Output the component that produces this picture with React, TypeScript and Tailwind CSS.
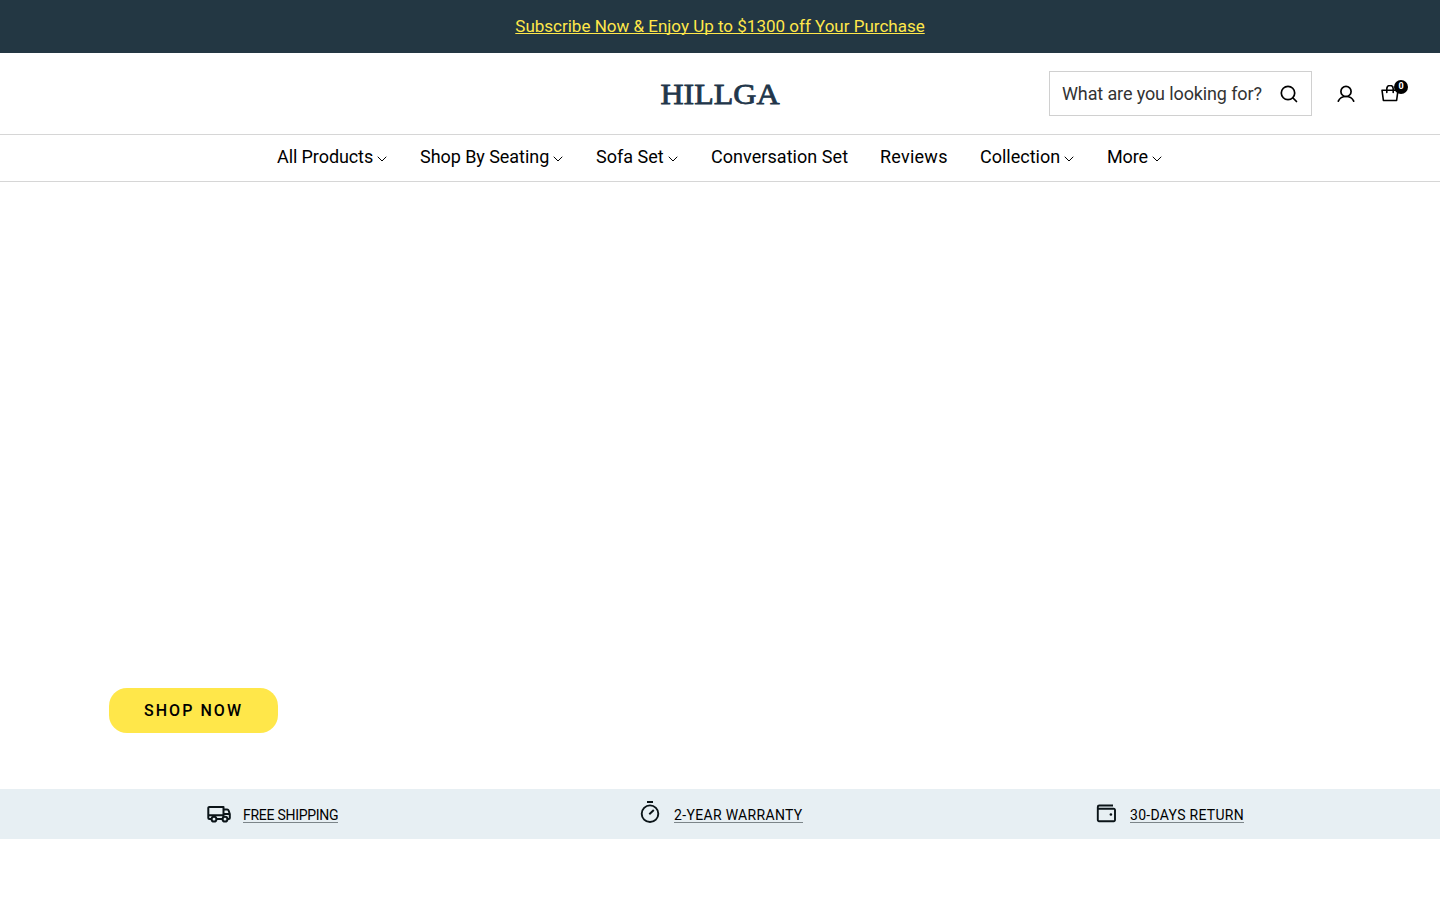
import React from "react";

const navItems = [
  { label: "All Products", menu: true, width: "w-[110px]", tracking: "tracking-[-0.09px]" },
  { label: "Shop By Seating", menu: true, width: "w-[143px]", tracking: "tracking-[-0.05px]" },
  { label: "Sofa Set", menu: true, width: "w-[82px]", tracking: "tracking-normal" },
  { label: "Conversation Set", menu: false, width: "w-[137px]", tracking: "tracking-[0.05px]" },
  { label: "Reviews", menu: false, width: "w-[68px]", tracking: "tracking-[0.24px]" },
  { label: "Collection", menu: true, width: "w-[94px]", tracking: "tracking-normal" },
  { label: "More", menu: true, width: "w-[55px]", tracking: "tracking-[-0.1px]" },
];

function Chevron() {
  return (
    <svg className="mt-[5px] h-[6px] w-[10px] shrink-0" viewBox="0 0 10 6" fill="none" stroke="#000" strokeWidth="1" strokeLinecap="round" strokeLinejoin="round">
      <path d="M1 1l4 4 4-4" />
    </svg>
  );
}

function TruckIcon() {
  return (
    <svg className="block h-6 w-6" viewBox="0 0 24 24" fill="none" stroke="#0b1418" strokeWidth="2" strokeLinejoin="round" strokeLinecap="round">
      <path d="M4.500 17H2.300A1 1 0 0 1 1.300 16V6a1 1 0 0 1 1-1H16.500V17H9.500M16.500 7.500h3.700a1.500 1.500 0 0 1 1.400 1l1.200 3.500v4a1 1 0 0 1-1 1h-1M16.500 12h6M1.500 13.300h15" />
      <circle cx="7" cy="17.200" r="2.400" fill="#e7eff3" />
      <circle cx="18" cy="17.200" r="2.400" fill="#e7eff3" />
    </svg>
  );
}

function TimerIcon() {
  return (
    <svg className="mb-[4px] block h-6 w-6" viewBox="0 0 24 24" fill="none" stroke="#0b1418" strokeWidth="1.900">
      <circle cx="12" cy="13.700" r="8.300" />
      <path d="M9 2h6M11.300 14.300l4.500-4.300" />
    </svg>
  );
}

function WalletIcon() {
  return (
    <svg className="mb-[3px] block h-6 w-6" viewBox="0 0 24 24" fill="none" stroke="#0b1418" strokeWidth="1.900" strokeLinejoin="round">
      <path d="M3.800 7.800h16a1.200 1.200 0 0 1 1.200 1.200v10a1.200 1.200 0 0 1-1.200 1.200H5A1.200 1.200 0 0 1 3.800 19V6A1.500 1.500 0 0 1 5.300 4.500H19" />
      <circle cx="16.900" cy="13.500" r="1.300" fill="#0b1418" stroke="none" />
    </svg>
  );
}

export default function App() {
  return (
    <div className="h-[900px] w-full overflow-hidden bg-white font-[Roboto,sans-serif] text-black">
      <div className="flex h-[53px] items-center justify-center bg-[#233743]">
        <a className="text-[17px] leading-[25px] whitespace-nowrap text-[#ffe74a] underline decoration-1 underline-offset-[1px] [text-decoration-skip-ink:none]">
          Subscribe Now &amp; Enjoy Up to $1300 off Your Purchase
        </a>
      </div>

      <header className="grid h-[82px] grid-cols-[1fr_120px_1fr] items-center border-b border-[#d6d6d6] pr-8 pl-8">
        <div />
        <svg className="block h-[40px] w-[120px] overflow-visible" viewBox="0 0 120 40" role="img" aria-label="HILLGA">
          <text x="0.500" y="30" textLength="119" lengthAdjust="spacingAndGlyphs" fill="#22364a" stroke="#22364a" strokeWidth="0.800" fontFamily="Liberation Serif, serif" fontSize="30">
            HILLGA
          </text>
        </svg>
        <div className="flex items-center justify-end">
          <div className="flex h-[45px] w-[263px] items-center justify-between border border-[#d0d0d0] pr-[13px] pl-3">
            <span className="text-lg tracking-[-0.12px] whitespace-nowrap text-[#333]">What are you looking for?</span>
            <svg className="h-[18px] w-[18px]" viewBox="0 0 18 18" fill="none" stroke="#000" strokeWidth="1.700" strokeLinecap="round">
              <circle cx="8" cy="8" r="6.700" />
              <path d="M13 13l3.500 3.500" />
            </svg>
          </div>
          <svg className="ml-[25px] h-[18px] w-[18px]" viewBox="0 0 18 18" fill="none" stroke="#000" strokeWidth="1.700" strokeLinecap="round">
            <circle cx="9" cy="6.400" r="5.100" />
            <path d="M1.300 16.200C2.600 13.200 5.500 11.500 9 11.500s6.400 1.700 7.700 4.700" />
          </svg>
          <div className="relative mr-[9px] ml-[26px] h-[18px] w-[18px]">
            <svg className="block h-[18px] w-[18px]" viewBox="0 0 18 18" fill="none" stroke="#000" strokeWidth="1.600" strokeLinecap="round" strokeLinejoin="round">
              <path d="M1 5.200h16l-1.400 10.300H2.400zM5.800 7.500V3.700a3.200 3.200 0 0 1 6.400 0V7.500" />
            </svg>
            <span className="absolute -top-[5px] left-[13px] flex h-[14px] w-[14px] items-center justify-center rounded-full bg-black pb-px text-[9px] leading-none font-bold text-white">0</span>
          </div>
        </div>
      </header>

      <nav className="flex h-[47px] justify-start gap-[33px] border-b border-[#d6d6d6] pb-[3px] pl-[277px]">
        {navItems.map((item) => (
          <a key={item.label} className={`flex items-center justify-between text-lg whitespace-nowrap ${item.width} ${item.tracking} ${item.menu ? "" : "-mr-px"}`}>
            {item.label}
            {item.menu && <Chevron />}
          </a>
        ))}
      </nav>

      <main className="flex h-[607px] items-end pb-14 pl-[109px]">
        <a className="flex h-[45px] w-[169px] items-center justify-center rounded-[18px] bg-[#ffe74a] text-base font-medium tracking-[2.050px]">
          SHOP NOW
        </a>
      </main>

      <section className="flex h-[50px] bg-[#e7eff3] text-sm">
        <div className="flex w-[432px] items-center gap-3 pl-[207px]">
          <TruckIcon />
          <span className="mt-px border-b border-[#7c8589] pt-px leading-[14px] tracking-[-0.270px] whitespace-nowrap">FREE SHIPPING</span>
        </div>
        <div className="flex w-[456px] items-center gap-3 pl-[206px]">
          <TimerIcon />
          <span className="mt-px border-b border-[#7c8589] pt-px leading-[14px] tracking-[0.330px] whitespace-nowrap">2-YEAR WARRANTY</span>
        </div>
        <div className="flex items-center gap-3 pl-[206px]">
          <WalletIcon />
          <span className="mt-px border-b border-[#7c8589] pt-px leading-[14px] tracking-[0.290px] whitespace-nowrap">30-DAYS RETURN</span>
        </div>
      </section>
    </div>
  );
}
